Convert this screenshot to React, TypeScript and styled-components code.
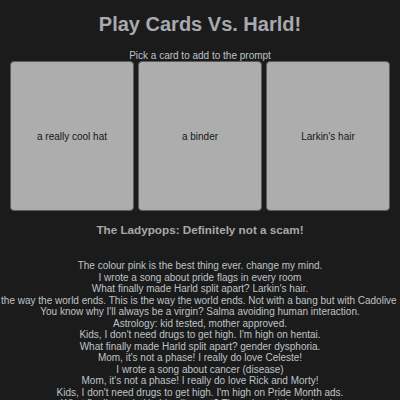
import React from "react";
import styled, { createGlobalStyle } from "styled-components";

const Global = createGlobalStyle`
  html, body {
    margin: 0;
    padding: 0;
    background: #1b1b1b;
  }
  body {
    font-family: "Liberation Sans", Arial, sans-serif;
    font-size: 10px;
    color: #bfc3c7;
    overflow: hidden;
  }
`;

const Page = styled.div`
  display: flex;
  flex-direction: column;
  align-items: stretch;
  overflow: hidden;
  min-height: 400px;
`;

const Title = styled.h1`
  margin: 13.4px 0;
  font-size: 20px;
  font-weight: bold;
  color: #a7aaae;
  text-align: center;
  line-height: 23px;
`;

const Subtitle = styled.div`
  text-align: center;
  line-height: 11.5px;
  color: #bfc3c7;
`;

const Hand = styled.div`
  display: flex;
  gap: 4px;
  padding: 0 10px;
`;

const Card = styled.button`
  flex: 1;
  height: 150px;
  margin: 0;
  padding: 0;
  background: #adadad;
  border: 1px solid #5c5c5c;
  border-radius: 4px;
  font-family: "Liberation Sans", Arial, sans-serif;
  font-size: 10px;
  color: #161616;
  display: flex;
  align-items: center;
  justify-content: center;
  cursor: pointer;
`;

const Prompt = styled.h3`
  margin: 11.7px 0 23.8px;
  font-size: 11.7px;
  font-weight: bold;
  color: #a8a8a8;
  text-align: center;
  line-height: 13.45px;
`;

const History = styled.div`
  display: flex;
  flex-direction: column;
  align-items: center;
`;

const Line = styled.div`
  white-space: nowrap;
  line-height: 11.5px;
  color: #bfc3c7;
`;

const hand = ["a really cool hat", "a binder", "Larkin's hair"];

const lines = [
  "The colour pink is the best thing ever. change my mind.",
  "I wrote a song about pride flags in every room",
  "What finally made Harld split apart? Larkin's hair.",
  "This is the way the world ends. This is the way the world ends. Not with a bang but with Cadolive Salma.",
  "You know why I'll always be a virgin? Salma avoiding human interaction.",
  "Astrology: kid tested, mother approved.",
  "Kids, I don't need drugs to get high. I'm high on hentai.",
  "What finally made Harld split apart? gender dysphoria.",
  "Mom, it's not a phase! I really do love Celeste!",
  "I wrote a song about cancer (disease)",
  "Mom, it's not a phase! I really do love Rick and Morty!",
  "Kids, I don't need drugs to get high. I'm high on Pride Month ads.",
  "What finally made Harld split apart? The colour pink, obviously.",
];

export default function App() {
  return (
    <>
      <Global />
      <Page>
        <Title>Play Cards Vs. Harld!</Title>
        <Subtitle>Pick a card to add to the prompt</Subtitle>
        <Hand>
          {hand.map((c) => (
            <Card key={c}>{c}</Card>
          ))}
        </Hand>
        <Prompt>The Ladypops: Definitely not a scam!</Prompt>
        <History>
          {lines.map((l, i) => (
            <Line key={i}>{l}</Line>
          ))}
        </History>
      </Page>
    </>
  );
}
